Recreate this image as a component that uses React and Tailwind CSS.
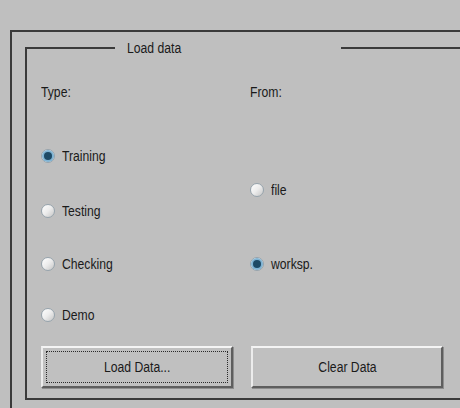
import React from 'react';

// narrow system font look: 14px Arial squeezed horizontally
const Txt = ({ children, center }) => (
  <span className={'inline-block scale-x-[0.87] whitespace-nowrap ' + (center ? 'origin-center' : 'origin-left')}>
    {children}
  </span>
);

const Radio = ({ checked, label }) => (
  <label className="flex items-center h-[16px] gap-[7px]">
    <span className="flex items-center justify-center w-[14px] h-[14px] rounded-full border border-[#97a4ad] bg-gradient-to-br from-white via-[#ececec] to-[#c6c6c6]">
      {checked && (
        <span className="w-[8px] h-[8px] rounded-full bg-[#1d4a66] ring-2 ring-[#7fb3d3]" />
      )}
    </span>
    <Txt>{label}</Txt>
  </label>
);

const Button = ({ focused, children }) => (
  <button className="w-[192px] h-[42px] p-[3px] bg-[#c0c0c0] border-2 border-t-[#f4f4f4] border-l-[#ececec] border-b-[#5e5e5e] border-r-[#5e5e5e] shadow-[1px_1px_0_#8e8e8e]">
    <div
      className={
        'h-full flex items-center justify-center border ' +
        (focused ? 'border-dotted border-[#2a2a2a]' : 'border-transparent')
      }
    >
      <Txt center>{children}</Txt>
    </div>
  </button>
);

export default function App() {
  return (
    <div className="w-[460px] h-[408px] overflow-hidden bg-[#bfbfbf] pt-[30px] pl-[10px] text-[14px] leading-[16px] text-[#1a1a1a] font-['Liberation_Sans',Arial,sans-serif]">
      <div className="h-full border-t-2 border-l-2 border-[#3a3a3a] pl-[13px] pt-[8px]">
        {/* Load data group */}
        <fieldset className="h-[360px] border-2 border-r-0 border-[#3a3a3a] pl-[14px] pt-[28px]">
          <legend className="ml-[74px] w-[226px] pl-[12px] text-left">
            <Txt>Load data</Txt>
          </legend>

          <div className="flex">
            <div className="w-[209px] flex flex-col">
              <div>
                <Txt>Type:</Txt>
              </div>
              <div className="mt-[48px]">
                <Radio checked label="Training" />
              </div>
              <div className="mt-[39px]">
                <Radio label="Testing" />
              </div>
              <div className="mt-[37px]">
                <Radio label="Checking" />
              </div>
              <div className="mt-[35px]">
                <Radio label="Demo" />
              </div>
            </div>
            <div className="flex flex-col">
              <div>
                <Txt>From:</Txt>
              </div>
              <div className="mt-[82px]">
                <Radio label="file" />
              </div>
              <div className="mt-[58px]">
                <Radio checked label="worksp." />
              </div>
            </div>
          </div>

          <div className="flex gap-[18px] mt-[23px]">
            <Button focused>Load Data...</Button>
            <Button>Clear Data</Button>
          </div>
        </fieldset>
      </div>
    </div>
  );
}
